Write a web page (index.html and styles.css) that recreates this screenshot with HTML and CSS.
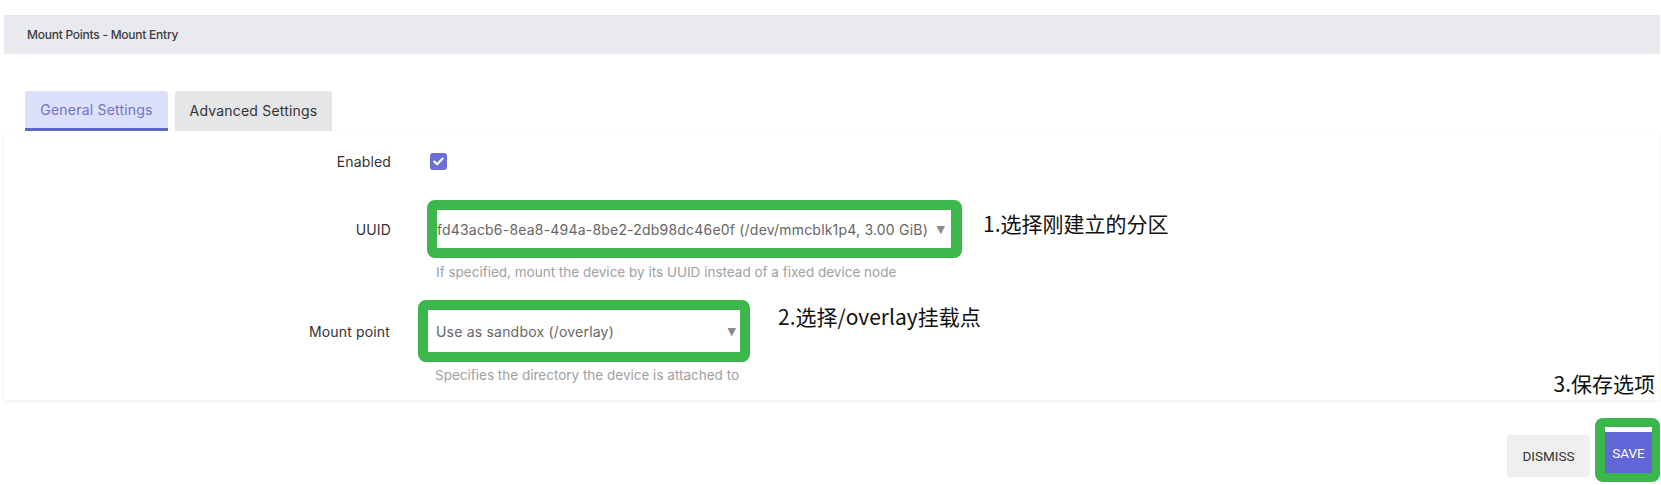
FILE: index.html
```html
<!DOCTYPE html>
<html lang="en">
<head>
<meta charset="utf-8">
<title>Mount Points - Mount Entry</title>
<link rel="stylesheet" href="styles.css">
</head>
<body>
<div class="header">Mount Points - Mount Entry</div>

<div class="tabs">
  <div class="tab tab-active">General Settings</div>
  <div class="tab">Advanced Settings</div>
</div>

<div class="panel">
  <div class="row row-enabled">
    <div class="label">Enabled</div>
    <div class="checkbox">
      <svg width="11" height="9" viewBox="0 0 11 9"><path d="M1.3 4.6 L4.2 7.3 L9.7 1.6" fill="none" stroke="#fff" stroke-width="2.2" stroke-linecap="round" stroke-linejoin="round"/></svg>
    </div>
  </div>

  <div class="row row-uuid">
    <div class="label">UUID</div>
    <div class="mark mark-uuid">
      <div class="select select-uuid">
        <span class="select-text">fd43acb6-8ea8-494a-8be2-2db98dc46e0f (/dev/mmcblk1p4, 3.00 GiB)</span>
        <span class="arrow">&#9660;</span>
      </div>
    </div>
    <div class="note note-1">1.选择刚建立的分区</div>
    <div class="desc">If specified, mount the device by its UUID instead of a fixed device node</div>
  </div>

  <div class="row row-mount">
    <div class="label">Mount point</div>
    <div class="mark mark-mount">
      <div class="select select-mount">
        <span class="select-text">Use as sandbox (/overlay)</span>
        <span class="arrow">&#9660;</span>
      </div>
    </div>
    <div class="note note-2">2.选择/overlay挂载点</div>
    <div class="desc">Specifies the directory the device is attached to</div>
  </div>
</div>

<div class="footer">
  <button class="btn btn-dismiss">DISMISS</button>
  <div class="save-wrap">
    <div class="note note-3">3.保存选项</div>
    <div class="save-mark">
      <button class="btn btn-save">SAVE</button>
    </div>
  </div>
</div>
</body>
</html>
```

FILE: styles.css
```css
* { box-sizing: border-box; }

body {
  margin: 0;
  background: #fff;
  font-family: "Inter", "Noto Sans", sans-serif;
  color: #333;
  width: 1661px;
  height: 485px;
  overflow: hidden;
}

.header {
  margin: 15px 1px 0 4px;
  height: 39px;
  background: #e9eaed;
  padding-left: 23px;
  display: flex;
  align-items: center;
  font-size: 12px;
  font-weight: 500;
  letter-spacing: -0.25px;
  color: #3a3c44;
}

.tabs {
  display: flex;
  gap: 7px;
  margin: 37px 0 0 25px;
  height: 40px;
}

.tab {
  height: 40px;
  display: flex;
  align-items: center;
  justify-content: center;
  font-size: 14px;
  letter-spacing: 0.2px;
  color: #333;
  background: #e4e6e8;
  border-radius: 3px 3px 0 0;
  width: 157px;
  padding-bottom: 2px;
}

.tab-active {
  width: 143px;
  background: #dde0fa;
  color: #6f74c8;
  border-bottom: 3px solid #5f65c6;
  padding-bottom: 0;
}

.panel {
  margin: 0 1px 0 4px;
  background: #fff;
  box-shadow: 0 1px 4px rgba(0, 0, 0, 0.07);
  padding: 20px 0 17px 0;
}

.row {
  display: grid;
  align-items: center;
}

.label {
  font-size: 14px;
  letter-spacing: 0.15px;
  color: #333;
  text-align: right;
}

.row-enabled {
  grid-template-columns: 387px 17px;
  column-gap: 39px;
  height: 20px;
}

.checkbox {
  width: 17px;
  height: 17px;
  border-radius: 3px;
  background: #6a6ed6;
  display: flex;
  align-items: center;
  justify-content: center;
}

.row-uuid {
  margin-top: 29px;
  grid-template-columns: 387px 535px auto;
  column-gap: 36px;
}

.row-mount {
  margin-top: 20px;
  grid-template-columns: 386px 332px auto;
  column-gap: 28px;
}

.row-uuid .note { margin-left: -15px; margin-top: -12px; }
.row-mount .note { margin-left: 0; margin-top: -30px; }

.mark {
  border-style: solid;
  border-color: #3bb74b;
  border-radius: 8px;
  background: #3bb74b;
}

.mark-uuid {
  height: 58px;
  border-width: 10px 11px 10px 10px;
}

.mark-mount {
  height: 62px;
  border-width: 10px 10px 10px 10px;
}

.select {
  height: 100%;
  background: #fff;
  display: flex;
  align-items: center;
  justify-content: space-between;
  font-size: 14px;
  letter-spacing: 0.2px;
  color: #666;
}

.select-uuid { padding: 0 6px 0 0; }
.select-mount { padding: 0 4px 0 8px; }

.select-text { white-space: nowrap; }

.arrow {
  font-size: 11px;
  letter-spacing: 0;
  color: #8a8a8e;
  font-family: "DejaVu Sans", sans-serif;
}

.desc {
  grid-column: 2 / 4;
  font-size: 13.5px;
  color: #a0a0a4;
  line-height: 16px;
  white-space: nowrap;
}

.row-uuid .desc { margin-top: 6px; margin-left: 9px; }
.row-mount .desc { margin-top: 5px; margin-left: 17px; }

.note {
  font-family: "Noto Sans CJK SC", "Noto Sans", sans-serif;
  font-size: 21px;
  color: #111;
  white-space: nowrap;
  line-height: 28px;
}

.footer {
  display: flex;
  justify-content: flex-end;
  align-items: flex-end;
  gap: 5px;
  margin: 18px 1px 0 0;
}

.btn {
  font-family: "Roboto", "Liberation Sans", sans-serif;
  font-size: 13.5px;
  border: none;
  padding: 0;
  cursor: pointer;
}

.btn-dismiss {
  width: 83px;
  height: 42px;
  background: #efefef;
  color: #333;
  border-radius: 3px;
  margin-bottom: 5px;
}

.save-wrap {
  position: relative;
}

.note-3 {
  position: absolute;
  right: 5px;
  bottom: 85px;
}

.save-mark {
  width: 65px;
  height: 64px;
  background: #3bb74b;
  border-radius: 8px;
  padding: 9px 8px 9px 10px;
}

.btn-save {
  width: 47px;
  height: 46px;
  background: #6167d6;
  color: #fff;
  border-top: 5px solid #fff;
  border-radius: 0;
  display: flex;
  align-items: center;
  justify-content: center;
}
```
